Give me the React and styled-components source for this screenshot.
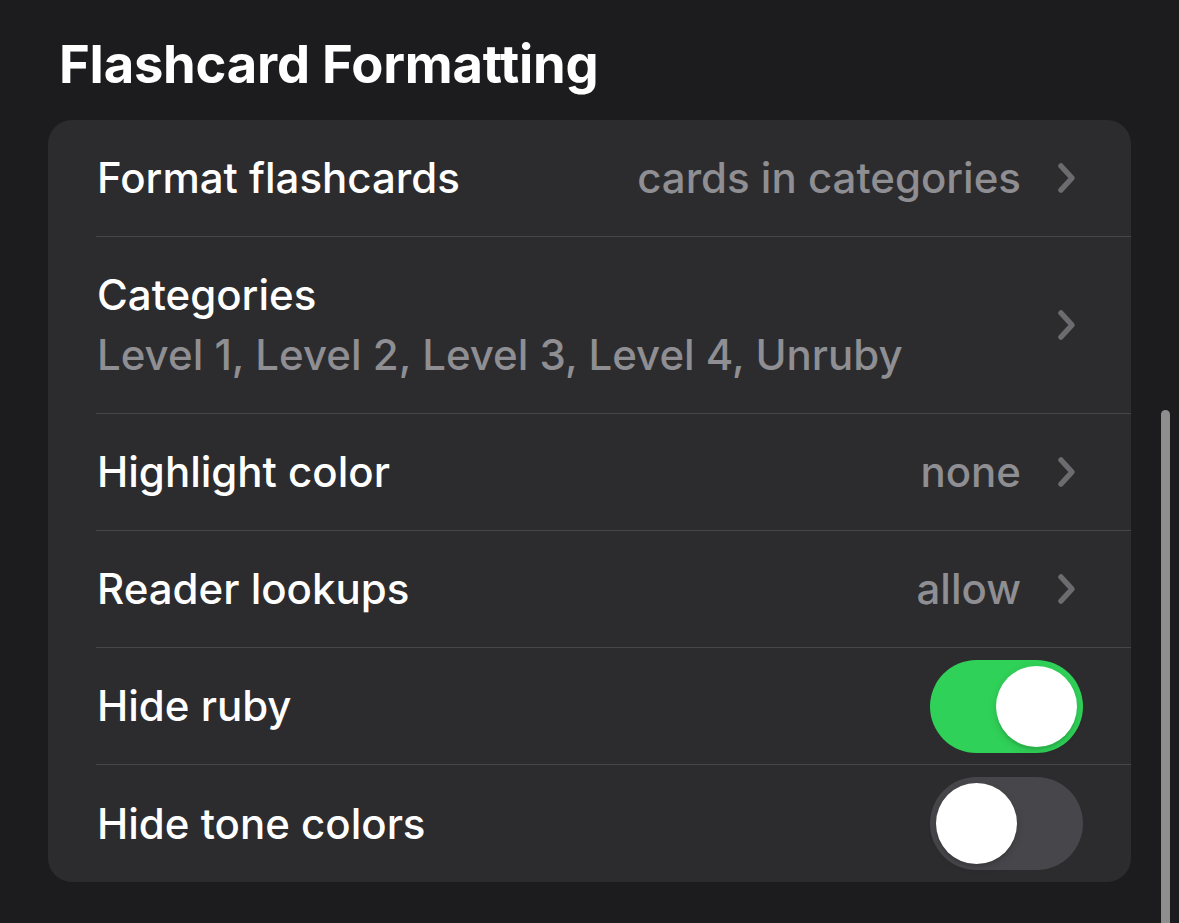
import React from "react";
import styled, { createGlobalStyle } from "styled-components";

const Global = createGlobalStyle`
  html, body { margin: 0; padding: 0; background: #1c1c1e; }
  body { font-family: Inter, "Noto Sans", sans-serif; -webkit-font-smoothing: antialiased; }
`;

const Page = styled.div`
  position: relative;
  width: 1179px;
  height: 923px;
  overflow: hidden;
  background: #1c1c1e;
  padding: 32px 0 0 48px;
  box-sizing: border-box;
`;

const Title = styled.h1`
  margin: 0 0 24px 11px;
  font-size: 52.5px;
  line-height: 64px;
  font-weight: 700;
  color: #ffffff;
  letter-spacing: -0.2px;
`;

const Card = styled.div`
  width: 1083px;
  background: #2c2c2e;
  border-radius: 24px;
  overflow: hidden;
`;

const Row = styled.div`
  padding-left: 48px;
`;

const RowInner = styled.div`
  display: flex;
  align-items: center;
  height: ${(p) => p.$h}px;
  box-sizing: border-box;
  padding-left: 1px;
  padding-right: 48px;
  border-top: ${(p) => (p.$first ? "none" : "1px solid #464649")};
`;

const Texts = styled.div`
  flex: 1;
  display: flex;
  flex-direction: column;
  gap: 14px;
  min-width: 0;
`;

const Label = styled.div`
  font-size: 42px;
  font-weight: 500;
  color: #ffffff;
  line-height: 46px;
`;

const Sub = styled.div`
  font-size: 42px;
  font-weight: 500;
  color: #8e8e93;
  line-height: 46px;
`;

const Value = styled.div`
  font-size: 42px;
  font-weight: 500;
  color: #8e8e93;
  line-height: 46px;
  margin-right: 36px;
`;

const ChevronBox = styled.svg`
  width: 20px;
  height: 32px;
  margin-right: 6px;
  flex: none;
`;

const Track = styled.div`
  position: relative;
  width: 153px;
  height: 93px;
  border-radius: 47px;
  background: ${(p) => (p.$on ? "#30d158" : "#47464b")};
  flex: none;
`;

const Knob = styled.div`
  position: absolute;
  top: 6px;
  left: ${(p) => (p.$on ? "66px" : "6px")};
  width: 81px;
  height: 81px;
  border-radius: 50%;
  background: #ffffff;
  box-shadow: 0 3px 8px rgba(0, 0, 0, 0.15), 0 3px 1px rgba(0, 0, 0, 0.06);
`;

const Scrollbar = styled.div`
  position: absolute;
  left: 1161px;
  top: 410px;
  width: 9px;
  height: 540px;
  border-radius: 5px;
  background: #8e8e8e;
`;

const Chevron = () => (
  <ChevronBox viewBox="0 0 20 32">
    <path
      d="M4 4 L15 16 L4 28"
      fill="none"
      stroke="#6b6b70"
      strokeWidth="5.5"
      strokeLinecap="round"
      strokeLinejoin="round"
    />
  </ChevronBox>
);

const Toggle = ({ on }) => (
  <Track $on={on}>
    <Knob $on={on} />
  </Track>
);

export default function App() {
  return (
    <>
      <Global />
      <Page>
        <Title>Flashcard Formatting</Title>
        <Card>
          <Row>
            <RowInner $first $h={116}>
              <Texts>
                <Label>Format flashcards</Label>
              </Texts>
              <Value>cards in categories</Value>
              <Chevron />
            </RowInner>
          </Row>
          <Row>
            <RowInner $h={177}>
              <Texts>
                <Label>Categories</Label>
                <Sub>Level 1, Level 2, Level 3, Level 4, Unruby</Sub>
              </Texts>
              <Chevron />
            </RowInner>
          </Row>
          <Row>
            <RowInner $h={117}>
              <Texts>
                <Label>Highlight color</Label>
              </Texts>
              <Value>none</Value>
              <Chevron />
            </RowInner>
          </Row>
          <Row>
            <RowInner $h={117}>
              <Texts>
                <Label>Reader lookups</Label>
              </Texts>
              <Value>allow</Value>
              <Chevron />
            </RowInner>
          </Row>
          <Row>
            <RowInner $h={117}>
              <Texts>
                <Label>Hide ruby</Label>
              </Texts>
              <Toggle on />
            </RowInner>
          </Row>
          <Row>
            <RowInner $h={118}>
              <Texts>
                <Label>Hide tone colors</Label>
              </Texts>
              <Toggle on={false} />
            </RowInner>
          </Row>
        </Card>
        <Scrollbar />
      </Page>
    </>
  );
}
